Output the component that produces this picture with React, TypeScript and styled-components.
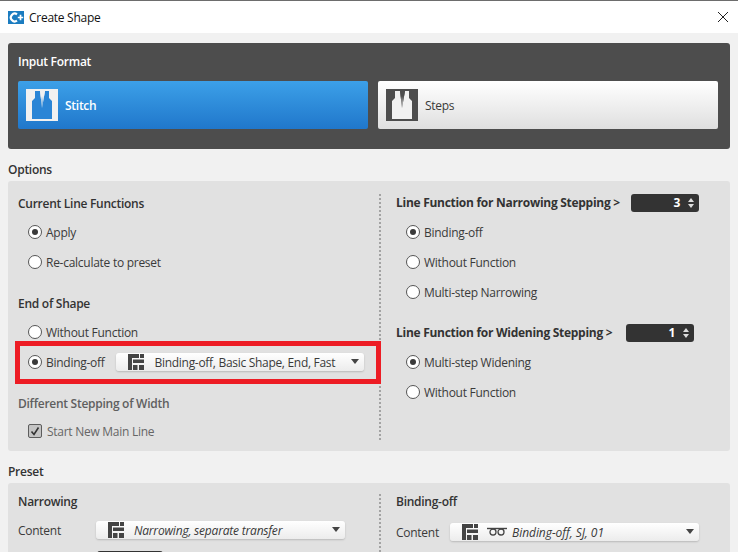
import React from 'react'
import styled, { createGlobalStyle } from 'styled-components'

const GlobalStyle = createGlobalStyle`
  html, body {
    margin: 0;
    height: 552px;
    overflow: hidden;
    background: #f1f1f1;
    font-family: "Open Sans", "Noto Sans", sans-serif;
    font-size: 12px;
    letter-spacing: -0.27px;
    color: #3a3a3a;
  }
`;

const Page = styled.div`
  position: relative;
  width: 738px;
  height: 552px;
  overflow: hidden;
`;

const TitleBar = styled.div`
  height: 32px;
  border-top: 1px solid #6d6d6d;
  background: #fff;
  display: flex;
  align-items: center;
  padding: 0 9px 0 8px;
  gap: 5px;
  color: #111;
`;

const TitleText = styled.div`
  flex: 1;
`;

const Content = styled.div`
  padding: 10px 8px 0;
`;

const InputPanel = styled.div`
  height: 106px;
  box-sizing: border-box;
  background: #4d4d4d;
  border-radius: 3px;
  padding: 10px 12px 0 10px;
`;

const InputTitle = styled.div`
  height: 18px;
  line-height: 18px;
  font-weight: 600;
  color: #fff;
  margin-bottom: 10px;
`;

const FormatRow = styled.div`
  display: grid;
  grid-template-columns: 350px 340px;
  column-gap: 10px;
`;

const FormatButton = styled.div<{ $active?: boolean }>`
  height: 48px;
  border-radius: 2px;
  display: flex;
  align-items: center;
  gap: 7px;
  padding-left: 8px;
  background: ${p => p.$active
    ? 'linear-gradient(#3ca0e8, #2077cb)'
    : 'linear-gradient(#ffffff, #dfdfdf)'};
  color: ${p => p.$active ? '#fff' : '#3a3a3a'};
  font-weight: ${p => p.$active ? 600 : 400};
`;

const SectionLabel = styled.div<{ $top: number; $bottom: number }>`
  height: 16px;
  line-height: 16px;
  font-weight: 600;
  color: #333;
  margin: ${p => p.$top}px 0 ${p => p.$bottom}px;
`;

const Panel = styled.div<{ $height?: number }>`
  display: grid;
  grid-template-columns: 372px 2px 348px;
  background: #e1e1e1;
  border-radius: 3px;
  height: ${p => p.$height}px;
`;

const Column = styled.div<{ $top?: number; $left?: number }>`
  padding-top: ${p => p.$top}px;
  padding-left: ${p => p.$left}px;
`;

const Divider = styled.div<{ $top: number }>`
  border-left: 2px dotted #a3a3a3;
  margin: ${p => p.$top}px 0 11px -1px;
`;

const Heading = styled.div<{ $gap?: number; $after?: number; $disabled?: boolean }>`
  height: 20px;
  line-height: 20px;
  display: flex;
  align-items: center;
  font-weight: 600;
  color: ${p => p.$disabled ? '#5f5f5f' : '#333'};
  margin-top: ${p => p.$gap || 0}px;
  margin-bottom: ${p => p.$after ?? 3}px;
`;

const HeadingText = styled.span<{ $width: number }>`
  width: ${p => p.$width}px;
  font-weight: 700;
  letter-spacing: -0.28px;
  white-space: nowrap;
`;

const OptionRow = styled.div<{ $gap?: number }>`
  height: 30px;
  display: flex;
  align-items: center;
  gap: ${p => p.$gap ?? 4}px;
  padding-left: 10px;
`;

const RadioMark = styled.span<{ $checked?: boolean }>`
  width: 14px;
  height: 14px;
  box-sizing: border-box;
  border: 1px solid #555;
  border-radius: 50%;
  background: #fff;
  display: flex;
  align-items: center;
  justify-content: center;
  &::after {
    content: '';
    display: ${p => p.$checked ? 'block' : 'none'};
    width: 6px;
    height: 6px;
    border-radius: 50%;
    background: #3a3a3a;
  }
`;

const CheckMark = styled.span`
  width: 14px;
  height: 14px;
  box-sizing: border-box;
  border: 1px solid #5c5c5c;
  border-radius: 2px;
  background: #c4c4c4;
  display: flex;
  align-items: center;
  justify-content: center;
`;

const DisabledText = styled.span`
  color: #666;
`;

const Combo = styled.div<{ $width: number; $left?: number }>`
  width: ${p => p.$width}px;
  height: 18px;
  margin-left: ${p => p.$left || 0}px;
  flex: none;
  box-sizing: border-box;
  border-radius: 3px;
  background: linear-gradient(#ffffff, #ececec);
  box-shadow: 0 1px 2px rgba(0, 0, 0, 0.18);
  display: flex;
  align-items: center;
  padding: 0 5px 0 12px;
`;

const ComboText = styled.span<{ $left: number; $spacing: number; $italic?: boolean }>`
  flex: 1;
  margin-left: ${p => p.$left}px;
  font-style: ${p => p.$italic ? 'italic' : 'normal'};
  letter-spacing: ${p => p.$spacing}px;
  white-space: nowrap;
`;

const LoopSlot = styled.span`
  display: flex;
  margin-left: 9px;
`;

const Arrow = styled.span`
  width: 0;
  height: 0;
  margin-bottom: 2px;
  border-left: 4px solid transparent;
  border-right: 4px solid transparent;
  border-top: 5px solid #444;
`;

const Spinner = styled.div`
  width: 68px;
  height: 18px;
  box-sizing: border-box;
  background: #333;
  border-radius: 3px;
  display: flex;
  align-items: center;
  justify-content: flex-end;
  gap: 8px;
  padding-right: 5px;
  color: #fff;
  font-weight: 700;
`;

const SpinArrows = styled.span`
  display: flex;
  flex-direction: column;
  gap: 2px;
  &::before, &::after {
    content: '';
    width: 0;
    height: 0;
    border-left: 3.5px solid transparent;
    border-right: 3.5px solid transparent;
  }
  &::before { border-bottom: 4px solid #ddd; }
  &::after { border-top: 4px solid #ddd; }
`;

const PresetRow = styled.div<{ $gap: number; $top: number }>`
  display: flex;
  align-items: center;
  margin-top: ${p => p.$top}px;
  gap: ${p => p.$gap}px;
  height: 18px;
`;

const ContentLabel = styled.span`
  width: 54px;
`;

const CutSpinner = styled.div`
  width: 66px;
  height: 18px;
  margin: 12px 0 0 79px;
  background: #333;
  border-radius: 3px;
`;

// red marker drawn over the screenshot
const Highlight = styled.div`
  position: absolute;
  left: 15px;
  top: 341px;
  width: 366px;
  height: 43px;
  box-sizing: border-box;
  border: 5px solid #ed1c24;
`;

const CloseIcon = () => (
  <svg width="12" height="12" viewBox="0 0 12 12">
    <path d="M1 1l10 10M11 1L1 11" stroke="#222" strokeWidth="1" fill="none" />
  </svg>
);

const AppLogo = () => (
  <svg width="16" height="13" viewBox="0 0 16 13">
    <rect width="16" height="13" fill="#1b7cc0" />
    <path d="M9 3.3A3.9 3.9 0 1 0 9 9.7" stroke="#fff" strokeWidth="2.2" fill="none" />
    <path d="M9.8 6.5h5.4M12.5 3.8v5.4" stroke="#fff" strokeWidth="1.7" fill="none" />
  </svg>
);

const Garment = ({ id, bg, fg }: { id: string; bg: string; fg: string }) => (
  <svg width="32" height="32" viewBox="0 0 32 32">
    <defs>
      <linearGradient id={id} x1="0" y1="0" x2="0" y2="1">
        <stop offset="0.3" stopColor={bg} />
        <stop offset="1" stopColor={fg} />
      </linearGradient>
    </defs>
    <rect width="32" height="32" fill={bg} />
    <path d="M6 30V12l3-3V2h5l2 17 3-17h4v7l3 3v18z" fill={fg} />
    <path d="M14 2l2 17 3-17z" fill={`url(#${id})`} />
  </svg>
);

const LayoutIcon = () => (
  <svg width="16" height="16" viewBox="0 0 16 16" fill="#444">
    <rect x="0" y="0" width="11" height="4" />
    <rect x="12" y="0" width="4" height="4" />
    <rect x="0" y="4" width="4" height="12" />
    <rect x="5" y="5.5" width="11" height="3.5" />
    <rect x="5" y="11" width="4.5" height="5" />
    <rect x="11" y="11" width="5" height="5" />
  </svg>
);

const LoopIcon = () => (
  <svg width="20" height="10" viewBox="0 0 20 10" fill="none" stroke="#444">
    <path d="M0 1.5h20" strokeWidth="1.4" />
    <circle cx="6" cy="5" r="3" strokeWidth="1.3" />
    <circle cx="14" cy="5" r="3" strokeWidth="1.3" />
  </svg>
);

const Radio = ({ label, checked }: { label: string; checked?: boolean }) => (
  <OptionRow>
    <RadioMark $checked={checked} />
    <span>{label}</span>
  </OptionRow>
);

const NumberBox = ({ value }: { value: number }) => (
  <Spinner>
    {value}
    <SpinArrows />
  </Spinner>
);

export default function App() {
  return (
    <Page>
      <GlobalStyle />
      <TitleBar>
        <AppLogo />
        <TitleText>Create Shape</TitleText>
        <CloseIcon />
      </TitleBar>
      <Content>
        <InputPanel>
          <InputTitle>Input Format</InputTitle>
          <FormatRow>
            <FormatButton $active>
              <Garment id="stitchNeck" bg="#f1f1f1" fg="#2a85d6" />
              Stitch
            </FormatButton>
            <FormatButton>
              <Garment id="stepsNeck" bg="#4d4d4d" fg="#f1f1f1" />
              Steps
            </FormatButton>
          </FormatRow>
        </InputPanel>

        <SectionLabel $top={13} $bottom={3}>Options</SectionLabel>
        <Panel $height={270}>
          <Column $top={13} $left={10}>
            <Heading>Current Line Functions</Heading>
            <Radio label="Apply" checked />
            <Radio label="Re-calculate to preset" />
            <Heading $gap={17}>End of Shape</Heading>
            <Radio label="Without Function" />
            <OptionRow>
              <RadioMark $checked />
              <span>Binding-off</span>
              <Combo $width={248} $left={7}>
                <LayoutIcon />
                <ComboText $left={11} $spacing={-0.3}>Binding-off, Basic Shape, End, Fast</ComboText>
                <Arrow />
              </Combo>
            </OptionRow>
            <Heading $gap={17} $after={2} $disabled>Different Stepping of Width</Heading>
            <OptionRow $gap={5}>
              <CheckMark>
                <svg width="10" height="10" viewBox="0 0 10 10">
                  <path d="M1.5 5.5l2.5 3 4.5-7" stroke="#333" strokeWidth="1.6" fill="none" />
                </svg>
              </CheckMark>
              <DisabledText>Start New Main Line</DisabledText>
            </OptionRow>
          </Column>
          <Divider $top={13} />
          <Column $top={12} $left={14}>
            <Heading $after={4}>
              <HeadingText $width={235}>Line Function for Narrowing Stepping &gt;</HeadingText>
              <NumberBox value={3} />
            </Heading>
            <Radio label="Binding-off" checked />
            <Radio label="Without Function" />
            <Radio label="Multi-step Narrowing" />
            <Heading $gap={16} $after={4}>
              <HeadingText $width={230}>Line Function for Widening Stepping &gt;</HeadingText>
              <NumberBox value={1} />
            </Heading>
            <Radio label="Multi-step Widening" checked />
            <Radio label="Without Function" />
          </Column>
        </Panel>

        <SectionLabel $top={13} $bottom={3}>Preset</SectionLabel>
        <Panel $height={120}>
          <Column $top={9} $left={10}>
            <Heading>Narrowing</Heading>
            <PresetRow $gap={24} $top={9}>
              <ContentLabel>Content</ContentLabel>
              <Combo $width={249}>
                <LayoutIcon />
                <ComboText $left={10} $spacing={-0.2} $italic>Narrowing, separate transfer</ComboText>
                <Arrow />
              </Combo>
            </PresetRow>
            <CutSpinner />
          </Column>
          <Divider $top={11} />
          <Column $top={9} $left={14}>
            <Heading>Binding-off</Heading>
            <PresetRow $gap={0} $top={11}>
              <ContentLabel>Content</ContentLabel>
              <Combo $width={249}>
                <LayoutIcon />
                <LoopSlot>
                  <LoopIcon />
                </LoopSlot>
                <ComboText $left={5} $spacing={-0.05} $italic>Binding-off, SJ, 01</ComboText>
                <Arrow />
              </Combo>
            </PresetRow>
          </Column>
        </Panel>
      </Content>
      <Highlight />
    </Page>
  )
}
